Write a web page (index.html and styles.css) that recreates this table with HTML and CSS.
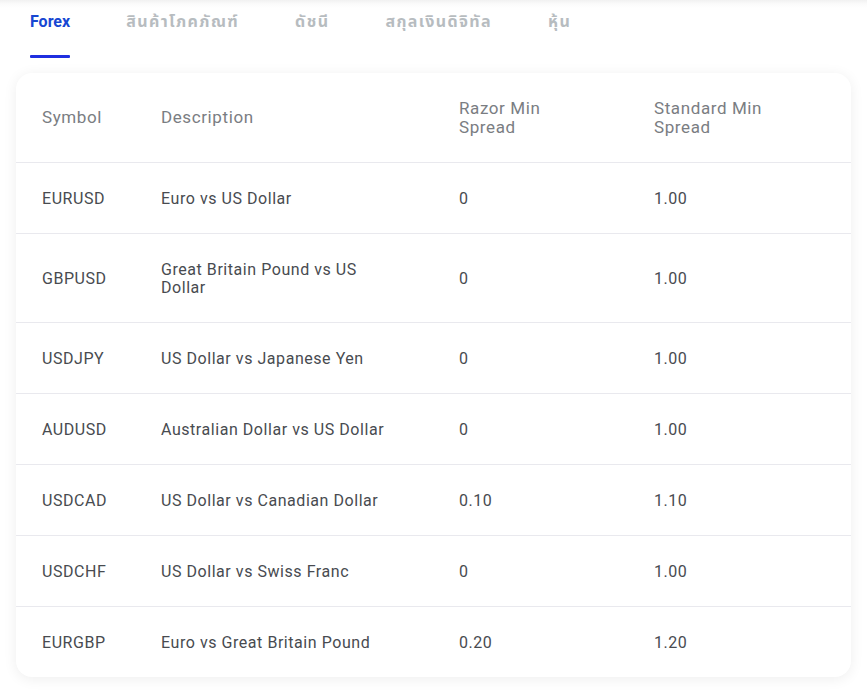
FILE: index.html
```html
<!DOCTYPE html>
<html lang="th">
<head>
<meta charset="utf-8">
<link rel="stylesheet" href="styles.css">
</head>
<body>
<nav class="tabs">
  <a class="tab active">Forex</a>
  <a class="tab thai t1">สินค้าโภคภัณฑ์</a>
  <a class="tab thai t2">ดัชนี</a>
  <a class="tab thai t3">สกุลเงินดิจิทัล</a>
  <a class="tab thai t4">หุ้น</a>
</nav>
<div class="card">
  <table class="spreads">
    <thead>
      <tr>
        <th class="c-sym">Symbol</th>
        <th class="c-desc">Description</th>
        <th class="c-raz">Razor Min<br>Spread</th>
        <th class="c-std">Standard Min<br>Spread</th>
      </tr>
    </thead>
    <tbody>
      <tr><td>EURUSD</td><td><span class="desc">Euro vs US Dollar</span></td><td>0</td><td>1.00</td></tr>
      <tr class="tall"><td>GBPUSD</td><td><span class="desc">Great Britain Pound vs US Dollar</span></td><td>0</td><td>1.00</td></tr>
      <tr><td>USDJPY</td><td><span class="desc">US Dollar vs Japanese Yen</span></td><td>0</td><td>1.00</td></tr>
      <tr><td>AUDUSD</td><td><span class="desc">Australian Dollar vs US Dollar</span></td><td>0</td><td>1.00</td></tr>
      <tr><td>USDCAD</td><td><span class="desc">US Dollar vs Canadian Dollar</span></td><td>0.10</td><td>1.10</td></tr>
      <tr><td>USDCHF</td><td><span class="desc">US Dollar vs Swiss Franc</span></td><td>0</td><td>1.00</td></tr>
      <tr><td>EURGBP</td><td><span class="desc">Euro vs Great Britain Pound</span></td><td>0.20</td><td>1.20</td></tr>
    </tbody>
  </table>
</div>
</body>
</html>
```
FILE: styles.css
```css
html, body {
  margin: 0;
  padding: 0;
}
body {
  background: linear-gradient(#f1f1f1 0, #fbfbfb 4px, #ffffff 8px) no-repeat;
  background-color: #fff;
  font-family: Roboto, "Noto Sans Thai", "Noto Sans", sans-serif;
  width: 867px;
  height: 690px;
  overflow: hidden;
}
.tabs {
  display: flex;
  gap: 56px;
  padding: 0 0 0 30px;
  height: 58px;
  box-sizing: border-box;
}
.tab {
  display: block;
  font-size: 16px;
  font-weight: 700;
  color: #b7bcc0;
  line-height: 20px;
  padding-top: 12px;
  height: 58px;
  box-sizing: border-box;
  position: relative;
  white-space: nowrap;
}
.tab.thai {
  letter-spacing: 1.4px;
}
.tab.active {
  color: #1747d2;
}
.tab.active::after {
  content: "";
  position: absolute;
  left: 0;
  right: 0;
  bottom: 0;
  height: 3px;
  border-radius: 1px;
  background: #1f2fe0;
}
.card {
  margin: 15px 16px 0 16px;
  background: #fff;
  border-radius: 16px;
  box-shadow: 0 2px 14px rgba(0, 0, 0, 0.07);
  overflow: hidden;
}
.spreads {
  width: 100%;
  border-collapse: collapse;
  table-layout: fixed;
}
.spreads th {
  text-align: left;
  font-weight: 400;
  font-size: 17px;
  line-height: 19px;
  letter-spacing: 0.6px;
  color: #7a7d82;
  height: 89px;
  padding: 0;
  vertical-align: middle;
}
.spreads td {
  font-size: 16px;
  line-height: 18px;
  letter-spacing: 0.55px;
  color: #484b50;
  height: 68px;
  padding: 2px 0 0 0;
  vertical-align: middle;
  border-top: 1px solid #e9e9ee;
}
.spreads tr.tall td {
  height: 86px;
}
.c-sym { width: 119px; }
.c-desc { width: 298px; }
.c-raz { width: 195px; }
.spreads th:first-child,
.spreads td:first-child {
  padding-left: 26px;
}
.desc {
  display: block;
  max-width: 230px;
}
```
